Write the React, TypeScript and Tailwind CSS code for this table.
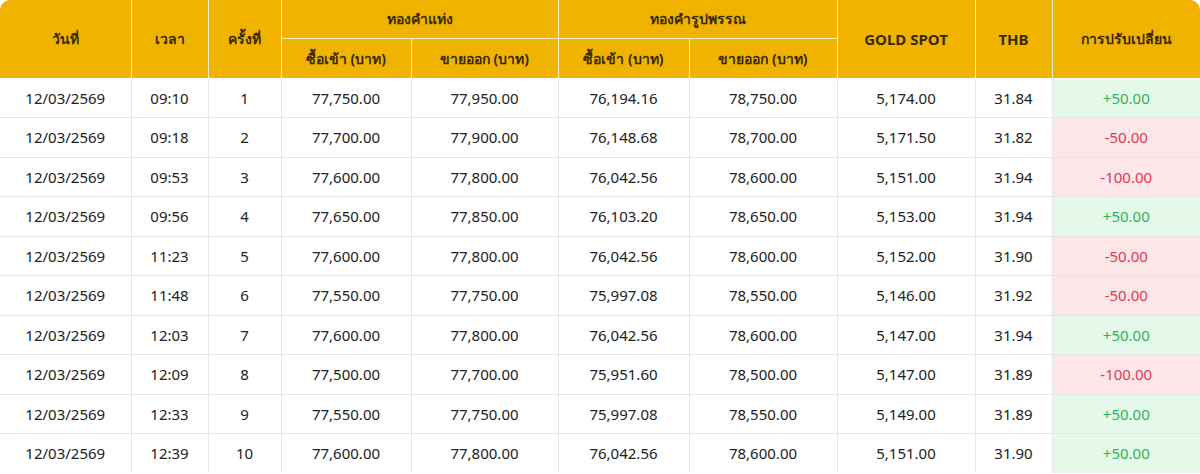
import React from "react";

type Row = {
  date: string;
  time: string;
  n: number;
  barBuy: string;
  barSell: string;
  ornBuy: string;
  ornSell: string;
  spot: string;
  thb: string;
  change: number;
};

const rows: Row[] = [
  { date: "12/03/2569", time: "09:10", n: 1, barBuy: "77,750.00", barSell: "77,950.00", ornBuy: "76,194.16", ornSell: "78,750.00", spot: "5,174.00", thb: "31.84", change: 50 },
  { date: "12/03/2569", time: "09:18", n: 2, barBuy: "77,700.00", barSell: "77,900.00", ornBuy: "76,148.68", ornSell: "78,700.00", spot: "5,171.50", thb: "31.82", change: -50 },
  { date: "12/03/2569", time: "09:53", n: 3, barBuy: "77,600.00", barSell: "77,800.00", ornBuy: "76,042.56", ornSell: "78,600.00", spot: "5,151.00", thb: "31.94", change: -100 },
  { date: "12/03/2569", time: "09:56", n: 4, barBuy: "77,650.00", barSell: "77,850.00", ornBuy: "76,103.20", ornSell: "78,650.00", spot: "5,153.00", thb: "31.94", change: 50 },
  { date: "12/03/2569", time: "11:23", n: 5, barBuy: "77,600.00", barSell: "77,800.00", ornBuy: "76,042.56", ornSell: "78,600.00", spot: "5,152.00", thb: "31.90", change: -50 },
  { date: "12/03/2569", time: "11:48", n: 6, barBuy: "77,550.00", barSell: "77,750.00", ornBuy: "75,997.08", ornSell: "78,550.00", spot: "5,146.00", thb: "31.92", change: -50 },
  { date: "12/03/2569", time: "12:03", n: 7, barBuy: "77,600.00", barSell: "77,800.00", ornBuy: "76,042.56", ornSell: "78,600.00", spot: "5,147.00", thb: "31.94", change: 50 },
  { date: "12/03/2569", time: "12:09", n: 8, barBuy: "77,500.00", barSell: "77,700.00", ornBuy: "75,951.60", ornSell: "78,500.00", spot: "5,147.00", thb: "31.89", change: -100 },
  { date: "12/03/2569", time: "12:33", n: 9, barBuy: "77,550.00", barSell: "77,750.00", ornBuy: "75,997.08", ornSell: "78,550.00", spot: "5,149.00", thb: "31.89", change: 50 },
  { date: "12/03/2569", time: "12:39", n: 10, barBuy: "77,600.00", barSell: "77,800.00", ornBuy: "76,042.56", ornSell: "78,600.00", spot: "5,151.00", thb: "31.90", change: 50 },
];

const widths = [131, 77, 73, 130, 147, 131, 148, 138, 77, 148];

const th = "border border-white/80 font-bold text-[14px] text-[#3a2a05] text-center align-middle";
const thLatin = "border border-white/80 font-bold text-[15px] text-[#3a2a05] text-center align-middle";
const td = "border border-[#e6e6e6] text-center align-middle text-[15px] text-[#222]";

const App = () => {
  return (
    <div className="w-[1200px] bg-white font-['Noto_Sans','Open_Sans',sans-serif]">
      <div className="overflow-hidden rounded-t-[10px]">
        <table className="w-full table-fixed border-collapse border-hidden">
          <colgroup>
            {widths.map((w, i) => (
              <col key={i} style={{ width: w }} />
            ))}
          </colgroup>
          <thead className="bg-[#efb300]">
            <tr className="h-[38px]">
              <th rowSpan={2} className={th}>วันที่</th>
              <th rowSpan={2} className={th}>เวลา</th>
              <th rowSpan={2} className={th}>ครั้งที่</th>
              <th colSpan={2} className={th}>ทองคำแท่ง</th>
              <th colSpan={2} className={th}>ทองคำรูปพรรณ</th>
              <th rowSpan={2} className={thLatin}>GOLD SPOT</th>
              <th rowSpan={2} className={thLatin}>THB</th>
              <th rowSpan={2} className={th}>การปรับเปลี่ยน</th>
            </tr>
            <tr className="h-[40px]">
              <th className={th}>ซื้อเข้า (บาท)</th>
              <th className={th}>ขายออก (บาท)</th>
              <th className={th}>ซื้อเข้า (บาท)</th>
              <th className={th}>ขายออก (บาท)</th>
            </tr>
          </thead>
          <tbody>
            {rows.map((r, i) => {
              const up = r.change > 0;
              return (
                <tr key={i} className="h-[39.5px]">
                  <td className={td}>{r.date}</td>
                  <td className={td}>{r.time}</td>
                  <td className={td}>{r.n}</td>
                  <td className={td}>{r.barBuy}</td>
                  <td className={td}>{r.barSell}</td>
                  <td className={td}>{r.ornBuy}</td>
                  <td className={td}>{r.ornSell}</td>
                  <td className={td}>{r.spot}</td>
                  <td className={td}>{r.thb}</td>
                  <td
                    className={
                      up
                        ? "border border-[#e6e6e6] text-center align-middle text-[15px] bg-[#e5f9ea] text-[#2cb458]"
                        : "border border-[#e6e6e6] text-center align-middle text-[15px] bg-[#fde6e8] text-[#e0394f]"
                    }
                  >
                    {up ? "+" : ""}
                    {r.change.toFixed(2)}
                  </td>
                </tr>
              );
            })}
          </tbody>
        </table>
      </div>
    </div>
  );
};

export default App;
